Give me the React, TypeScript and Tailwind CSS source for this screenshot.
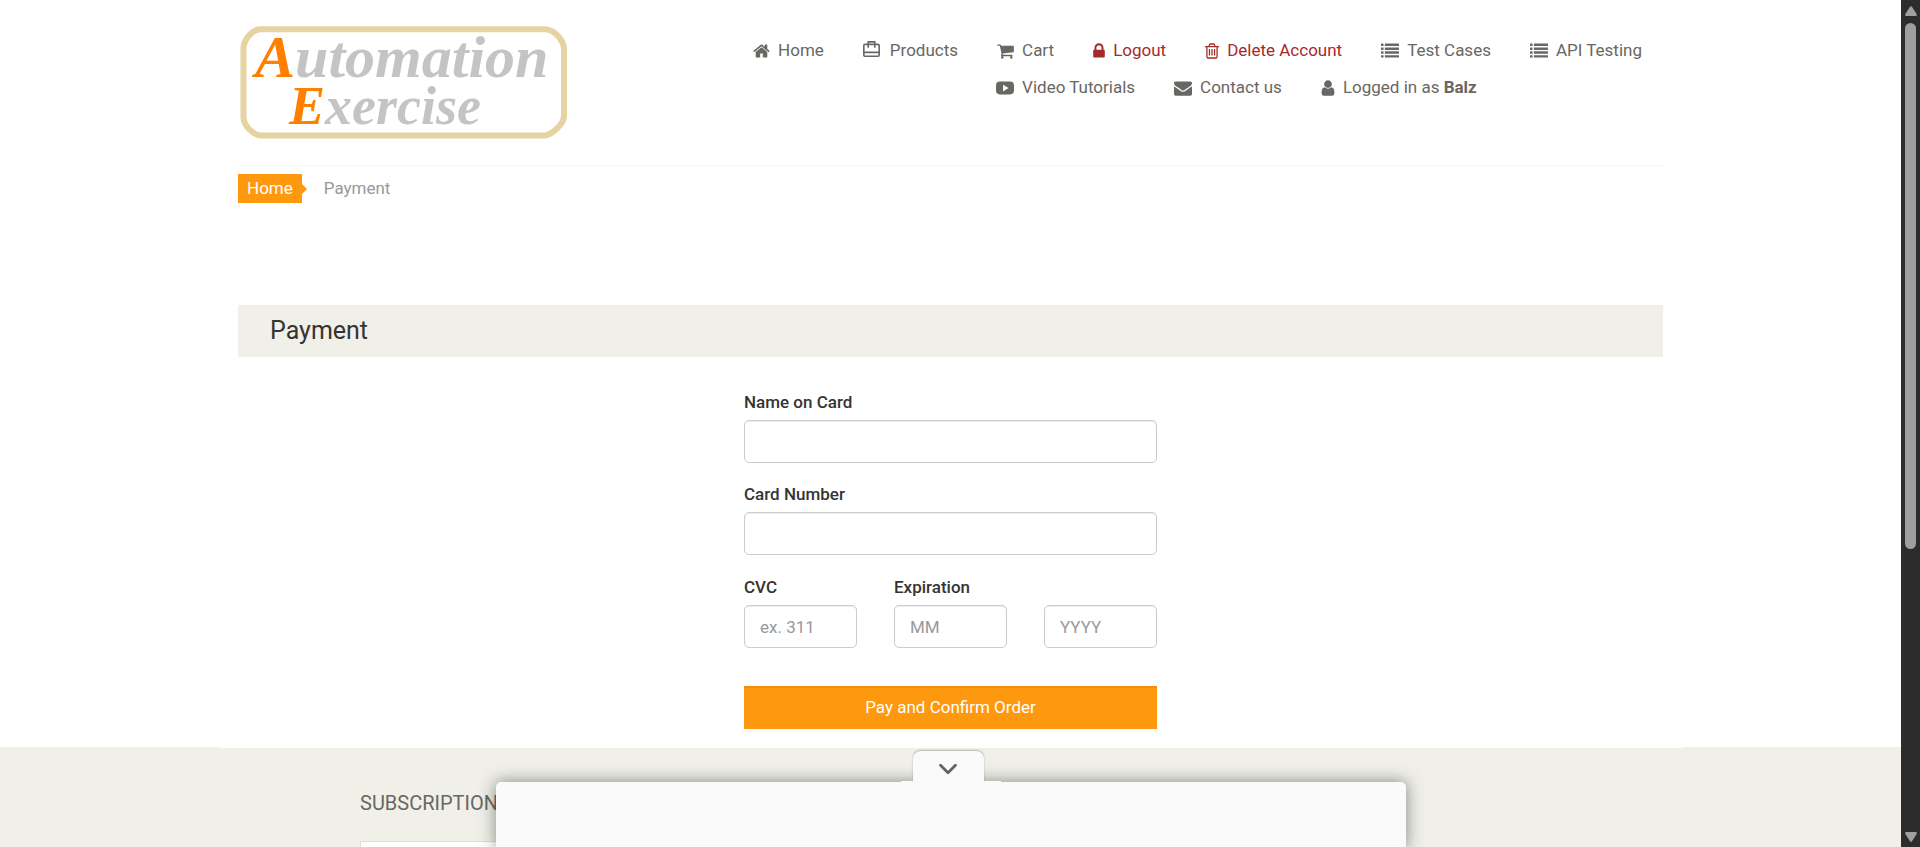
import type { ReactNode } from "react";
import { ChevronDown } from "lucide-react";

type IconProps = { left: number; width: number; className: string; children: ReactNode };

function Glyph({ left, width, className, children }: IconProps) {
  return (
    <svg viewBox={`${left} 0 ${width} 1792`} className={`h-[18px] shrink-0 fill-current ${className}`} aria-hidden="true">
      {children}
    </svg>
  );
}

const HomeIcon = () => (
  <Glyph left={64} width={1664} className="w-[17px]">
    <path d="M1472 992v480q0 26-19 45t-45 19h-384v-384h-256v384h-384q-26 0-45-19t-19-45v-480q0-1 .5-3t.5-3l575-474 575 474q1 2 1 6zm223-69l-62 74q-8 9-21 11h-3q-13 0-21-7l-692-577-692 577q-12 8-24 7-13-2-21-11l-62-74q-8-10-7-23.5t11-21.5l719-599q32-26 76-26t76 26l244 204v-195q0-14 9-23t23-9h192q14 0 23 9t9 23v408l219 182q10 8 11 21.5t-7 23.5z" />
  </Glyph>
);

const CaseIcon = () => (
  <svg viewBox="0 0 17 16" className="mb-1 mr-0.5 h-4 w-[17px] shrink-0" fill="none" stroke="currentColor" strokeWidth="1.6" aria-hidden="true">
    <rect x="0.8" y="3.4" width="15.4" height="11.8" rx="1.2" />
    <path d="M0.8 11.4h15.4M5.2 6V0.9h6.600V6M4.400 6h1.600M11 6h1.600" />
  </svg>
);

const CartIcon = () => (
  <Glyph left={64} width={1664} className="w-[17px]">
    <path d="M704 1536q0 52-38 90t-90 38-90-38-38-90 38-90 90-38 90 38 38 90zm896 0q0 52-38 90t-90 38-90-38-38-90 38-90 90-38 90 38 38 90zm128-1088v512q0 24-16.5 42.5t-40.5 21.5l-1044 122q13 60 13 70 0 16-24 64h920q26 0 45 19t19 45-19 45-45 19h-1024q-26 0-45-19t-19-45q0-11 8-31.5t16-36 21.5-40 15.5-29.5l-177-823h-204q-26 0-45-19t-19-45 19-45 45-19h256q16 0 28.5 6.5t19.5 15.5 13 24.5 8 26 5.5 29.5 4.5 26h1201q26 0 45 19t19 45z" />
  </Glyph>
);

const LockIcon = () => (
  <Glyph left={320} width={1152} className="w-3">
    <path d="M640 768h512v-192q0-106-75-181t-181-75-181 75-75 181v192zm832 96v576q0 40-28 68t-68 28h-960q-40 0-68-28t-28-68v-576q0-40 28-68t68-28h32v-192q0-184 132-316t316-132 316 132 132 316v192h32q40 0 68 28t28 68z" />
  </Glyph>
);

const TrashIcon = () => (
  <Glyph left={192} width={1408} className="w-3.5">
    <path d="M704 736v576q0 14-9 23t-23 9h-64q-14 0-23-9t-9-23v-576q0-14 9-23t23-9h64q14 0 23 9t9 23zm256 0v576q0 14-9 23t-23 9h-64q-14 0-23-9t-9-23v-576q0-14 9-23t23-9h64q14 0 23 9t9 23zm256 0v576q0 14-9 23t-23 9h-64q-14 0-23-9t-9-23v-576q0-14 9-23t23-9h64q14 0 23 9t9 23zm128 724v-948h-896v948q0 22 7 40.5t14.5 27 10.5 8.5h832q3 0 10.5-8.5t14.5-27 7-40.5zm-672-1076h448l-48-117q-7-9-17-11h-317q-10 2-17 11zm928 32v64q0 14-9 23t-23 9h-96v948q0 83-47 143.5t-113 60.5h-832q-66 0-113-58.5t-47-141.5v-952h-96q-14 0-23-9t-9-23v-64q0-14 9-23t23-9h309l70-167q15-37 54-63t79-26h320q40 0 79 26t54 63l70 167h309q14 0 23 9t9 23z" />
  </Glyph>
);

const ListIcon = () => (
  <Glyph left={0} width={1792} className="w-[18px]">
    {[256, 640, 1024, 1408].map((y) => (
      <g key={y}>
        <rect x="0" y={y - 96} width="256" height="240" rx="32" />
        <rect x="384" y={y - 96} width="1408" height="240" rx="32" />
      </g>
    ))}
  </Glyph>
);

const VideoIcon = () => (
  <Glyph left={0} width={1792} className="w-[18px]">
    <path fillRule="evenodd" d="M380 256h1032q380 0 380 380v520q0 380-380 380H380Q0 1536 0 1156V636q0-380 380-380zM704 560v672l544-336z" />
  </Glyph>
);

const EnvelopeIcon = () => (
  <Glyph left={0} width={1792} className="w-[18px]">
    <path d="M1792 710v794q0 66-47 113t-113 47h-1472q-66 0-113-47t-47-113v-794q44 49 101 87 362 246 497 345 57 42 92.5 65.5t94.5 48 110 24.5h2q51 0 110-24.5t94.5-48 92.5-65.5q170-123 498-345 57-39 100-87zm0-294q0 79-49 151t-122 123q-376 261-468 325-10 7-42.5 31t-54 38.5-52 32.5-57.5 27-50 9h-2q-23 0-50-9t-57.5-27-52-32.5-54-38.5-42.5-31q-91-64-262-182.5t-205-142.5q-62-42-117-115.5t-55-136.5q0-78 41.5-130t118.5-52h1472q65 0 112.5 47t47.5 113z" />
  </Glyph>
);

const UserIcon = () => (
  <Glyph left={256} width={1280} className="w-3.5">
    <path d="M1536 1399q0 109-62.5 187t-150.5 78h-854q-88 0-150.5-78t-62.5-187q0-85 8.5-160.5t31.5-152 58.5-131 94-89 134.5-34.5q131 128 313 128t313-128q76 0 134.5 34.5t94 89 58.5 131 31.5 152 8.5 160.5zm-256-887q0 159-112.5 271.5t-271.5 112.5-271.5-112.5-112.5-271.5 112.5-271.5 271.5-112.5 271.5 112.5 112.5 271.5z" />
  </Glyph>
);

function Logo() {
  return (
    <svg viewBox="0 0 330 114" className="h-[114px] w-[330px]" role="img" aria-label="Automation Exercise">
      <path
        d="M23 4.200H307Q313 4.200 319 10T326 23V91Q326 97 319 103.500T307 110.500H23Q17 110.500 11 104T5.500 91V23Q5.500 17 11 10.500T23 4.200Z"
        fill="#fff"
        stroke="#e7d2a2"
        strokeWidth="6"
      />
      <g className="font-['Liberation_Serif',serif] font-bold italic" fill="#c4c4c4">
        <text x="17" y="52" fontSize="60">
          <tspan fill="#ff8000">A</tspan>utomation
        </text>
        <text x="51" y="99" fontSize="54">
          <tspan fill="#ff8000">E</tspan>xercise
        </text>
      </g>
    </svg>
  );
}

function NavItem({ icon, children, danger = false }: { icon: ReactNode; children: ReactNode; danger?: boolean }) {
  return (
    <li>
      <a href="#" className={`flex items-center gap-2 whitespace-nowrap ${danger ? "text-[#a52a2a]" : "text-[#696763]"}`}>
        {icon}
        <span>{children}</span>
      </a>
    </li>
  );
}

const field =
  "h-[43px] w-full rounded-[5px] border border-[#ccc] bg-white px-[15px] text-[#555] shadow-[inset_0_1px_1px_rgba(0,0,0,0.075)] placeholder:text-[#999] outline-none focus:border-[#66afe9]";
const labelStyle = "mb-1 block font-medium leading-[27px]";

export default function App() {
  return (
    <div className="flex h-screen overflow-hidden bg-white font-['Roboto',sans-serif] text-[17px] leading-[25px] text-[#363432]">
      <div className="relative min-w-0 flex-1 overflow-hidden">
        <div className="mx-auto max-w-[1463px] px-[19px]">
          <header className="flex h-[166px] items-start justify-between border-b border-[#f5f5f5] pt-[25px]">
            <a href="#">
              <Logo />
            </a>
            <nav className="pr-[21px] pt-[13px]">
              <ul className="flex gap-[39px]">
                <NavItem icon={<HomeIcon />}>Home</NavItem>
                <NavItem icon={<CaseIcon />}>Products</NavItem>
                <NavItem icon={<CartIcon />}>Cart</NavItem>
                <NavItem icon={<LockIcon />} danger>Logout</NavItem>
                <NavItem icon={<TrashIcon />} danger>Delete Account</NavItem>
                <NavItem icon={<ListIcon />}>Test Cases</NavItem>
                <NavItem icon={<ListIcon />}>API Testing</NavItem>
              </ul>
              <ul className="mt-3 flex gap-[39px] pl-[243px]">
                <NavItem icon={<VideoIcon />}>Video Tutorials</NavItem>
                <NavItem icon={<EnvelopeIcon />}>Contact us</NavItem>
                <NavItem icon={<UserIcon />}>
                  Logged in as <b className="font-bold">Balz</b>
                </NavItem>
              </ul>
            </nav>
          </header>

          <main>
            <ol className="flex items-center pt-2">
              <li className="flex items-center">
                <a href="#" className="bg-[#fe980f] px-[9px] py-0.5 text-white">Home</a>
                <svg viewBox="0 0 5 10" className="h-2.5 w-[5px] fill-[#fe980f]" aria-hidden="true">
                  <path d="M0 0L5 5L0 10Z" />
                </svg>
              </li>
              <li className="pl-[17px] text-[#999]">Payment</li>
            </ol>

            <h2 className="mt-[102px] bg-[#f0f0e9] px-8 py-[13px] text-[25px] leading-[26px]">Payment</h2>

            <form className="mx-auto mt-8 flex w-[413px] max-w-full flex-col" onSubmit={(e) => e.preventDefault()}>
              <div className="mb-[18px]">
                <label htmlFor="name" className={labelStyle}>Name on Card</label>
                <input id="name" type="text" className={field} />
              </div>
              <div className="mb-[19px]">
                <label htmlFor="number" className={labelStyle}>Card Number</label>
                <input id="number" type="text" className={field} />
              </div>
              <div className="grid grid-cols-3 items-end gap-[37px]">
                <div>
                  <label htmlFor="cvc" className={labelStyle}>CVC</label>
                  <input id="cvc" type="text" placeholder="ex. 311" className={field} />
                </div>
                <div>
                  <label htmlFor="month" className={labelStyle}>Expiration</label>
                  <input id="month" type="text" placeholder="MM" className={field} />
                </div>
                <input type="text" placeholder="YYYY" aria-label="Expiration year" className={field} />
              </div>
              <button type="submit" className="mt-[38px] h-[43px] w-full bg-[#fe980f] text-white shadow-[inset_0_2px_2px_rgba(0,0,0,0.06)]">
                Pay and Confirm Order
              </button>
            </form>
          </main>
        </div>

        <footer className="mt-[18px] bg-[#f0f0e9]">
          <div className="mx-auto max-w-[1463px] border-t border-white px-[141px] pb-20 pt-[41px]">
            <h2 className="text-[20px] leading-[28px] text-[#696763]">SUBSCRIPTION</h2>
            <input type="email" aria-label="Your email address" className="mt-6 h-[42px] w-[340px] border border-[#ddd] bg-white px-3" />
          </div>
        </footer>

        <aside className="absolute inset-x-0 bottom-0 mx-auto h-[65px] max-w-[910px] rounded-t-[5px] bg-[#fafafa] shadow-[0_0_16px_1px_rgba(60,64,50,0.55)]" aria-label="Advertisement">
          <div className="absolute -top-px left-[405px] h-px w-[100px] bg-[#fafafa]" />
          <button
            type="button"
            aria-label="Collapse advertisement"
            className="absolute -top-[31px] left-[417px] flex h-[31px] w-[71px] items-center justify-center rounded-t-lg bg-[#fafafa] pt-1 text-[#616161] shadow-[0_-1px_2px_rgba(0,0,0,0.25)]"
          >
            <ChevronDown size={30} strokeWidth={2.2} />
          </button>
        </aside>
      </div>

      <div className="flex w-[19px] shrink-0 flex-col items-center bg-[#2c2c2c] pb-[5px] pt-1.5" aria-hidden="true">
        <svg viewBox="0 0 12 10" className="h-2.5 w-3 fill-[#9f9f9f]">
          <path d="M5 .8Q6 -.3 7 .8L11.700 8.200Q12.300 9.700 11 9.900H1Q-.3 9.700 .3 8.200Z" />
        </svg>
        <div className="mt-[7px] h-[526px] w-[11px] rounded-full bg-[#9f9f9f]" />
        <svg viewBox="0 0 12 10" className="mt-auto h-2.5 w-3 fill-[#9f9f9f]">
          <path d="M5 9.200Q6 10.300 7 9.200L11.700 1.800Q12.300 .3 11 .1H1Q-.3 .3 .3 1.800Z" />
        </svg>
      </div>
    </div>
  );
}
